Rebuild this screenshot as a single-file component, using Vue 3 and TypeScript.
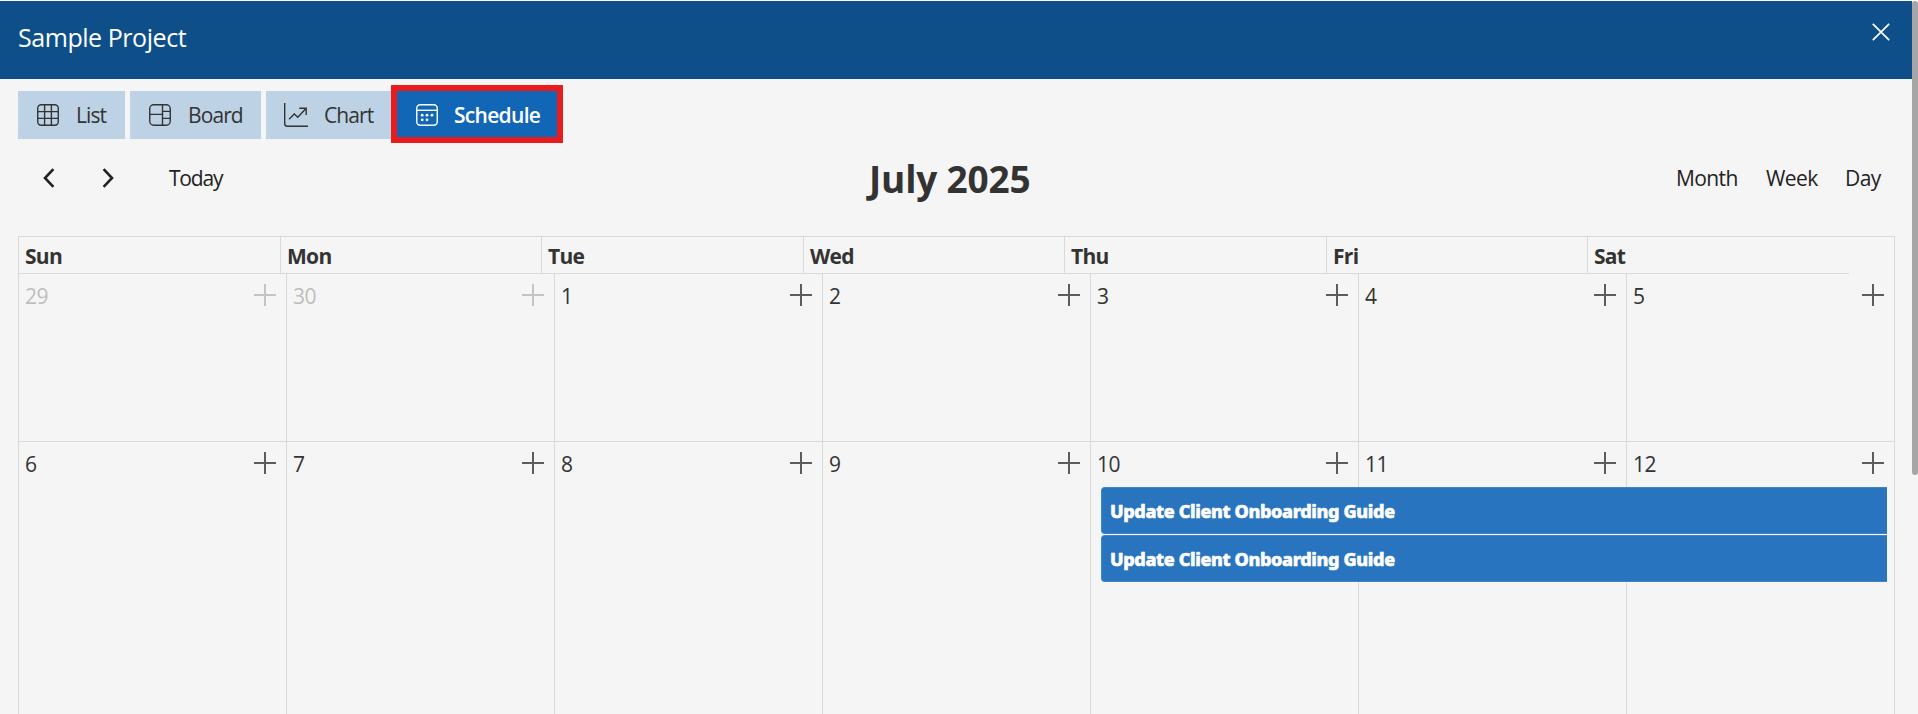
<script setup lang="ts">
interface DayCell {
  date: number
  muted?: boolean
}

interface CalendarEvent {
  title: string
}

const weekdays: string[] = ['Sun', 'Mon', 'Tue', 'Wed', 'Thu', 'Fri', 'Sat']

const weeks: DayCell[][] = [
  [{ date: 29, muted: true }, { date: 30, muted: true }, { date: 1 }, { date: 2 }, { date: 3 }, { date: 4 }, { date: 5 }],
  [{ date: 6 }, { date: 7 }, { date: 8 }, { date: 9 }, { date: 10 }, { date: 11 }, { date: 12 }],
]

const events: CalendarEvent[] = [
  { title: 'Update Client Onboarding Guide' },
  { title: 'Update Client Onboarding Guide' },
]
</script>

<template>
  <div class="page">
    <header class="header">
      <h1 class="project">Sample Project</h1>
      <button class="close" aria-label="Close">
        <svg width="18" height="18" viewBox="0 0 18 18"><path d="M0.8 0.8L17.2 17.2M17.2 0.8L0.8 17.2" /></svg>
      </button>
    </header>

    <nav class="tabs">
      <button class="tab list">
        <svg class="icon" width="24" height="24" viewBox="0 0 24 24">
          <rect x="1.75" y="1.75" width="20.5" height="20.5" rx="3.5" />
          <path d="M8.6 1.8V22.2M15.4 1.8V22.2M1.8 8.6H22.2M1.8 15.4H22.2" />
        </svg>
        <span>List</span>
      </button>
      <button class="tab board">
        <svg class="icon" width="24" height="24" viewBox="0 0 24 24">
          <rect x="1.75" y="1.75" width="20.5" height="20.5" rx="4" />
          <path d="M14.5 1.8V22.2M1.8 11.4H14.5M14.5 8.4H22.2M14.5 15.4H22.2" />
        </svg>
        <span>Board</span>
      </button>
      <button class="tab chart">
        <svg class="icon" width="26" height="26" viewBox="0 0 26 26">
          <path d="M1.7 1V21.5Q1.7 24.3 4.5 24.3H25" />
          <path d="M6 17.3L11.3 12L14.8 15.3L23 6.6M16.3 6.2H23.2V13" />
        </svg>
        <span>Chart</span>
      </button>
      <button class="tab schedule">
        <svg class="icon" width="24" height="24" viewBox="0 0 24 24">
          <rect x="1.75" y="1.75" width="20.5" height="20.5" rx="3.5" />
          <path d="M1.8 7.3H22.2" />
          <g class="dots">
            <circle cx="7.2" cy="12.2" r="1.4" /><circle cx="12" cy="12.2" r="1.4" /><circle cx="17" cy="12.2" r="1.4" />
            <circle cx="7.2" cy="16.8" r="1.4" /><circle cx="12" cy="16.8" r="1.4" />
          </g>
        </svg>
        <span>Schedule</span>
      </button>
    </nav>

    <div class="toolbar">
      <div class="nav-group">
        <button aria-label="Previous"><svg width="12" height="20" viewBox="0 0 12 20"><path d="M10.4 1.2L2 10L10.4 18.8" /></svg></button>
        <button aria-label="Next"><svg width="12" height="20" viewBox="0 0 12 20"><path d="M1.6 1.2L10 10L1.6 18.8" /></svg></button>
      </div>
      <button class="today">Today</button>
      <h2 class="month-title">July 2025</h2>
      <div class="views">
        <button class="month">Month</button>
        <button class="week-view">Week</button>
        <button class="day-view">Day</button>
      </div>
    </div>

    <main class="calendar">
      <div class="weekdays">
        <div v-for="day in weekdays" :key="day" class="weekday">{{ day }}</div>
      </div>
      <div v-for="(week, w) in weeks" :key="w" class="week">
        <div v-for="cell in week" :key="cell.date" class="cell" :class="{ muted: cell.muted }">
          <span class="date">{{ cell.date }}</span>
          <svg class="plus" width="22" height="22" viewBox="0 0 22 22"><path d="M0 11H22M11 0V22" /></svg>
        </div>
        <div v-if="w === 1" class="events">
          <div v-for="(event, i) in events" :key="i" class="event">{{ event.title }}</div>
        </div>
      </div>
    </main>

    <div class="scrollbar"></div>
  </div>
</template>

<style>
html,
body {
  overflow: hidden;
}
</style>

<style scoped>
.page {
  position: relative;
  box-sizing: border-box;
  width: 1918px;
  height: 714px;
  padding: 1px 6px 0 0;
  overflow: hidden;
  background: #f5f5f5;
  box-shadow: inset 0 1px #fff;
  color: #333;
  font-family: "Segoe UI", "Open Sans", "Noto Sans", sans-serif;
  font-size: 21px;
  line-height: 28px;
}

button {
  margin: 0;
  padding: 0;
  border: 0;
  background: transparent;
  color: inherit;
  font: inherit;
  letter-spacing: inherit;
}

h1,
h2 {
  margin: 0;
}

svg {
  display: block;
  flex: none;
  fill: none;
  stroke: currentColor;
}

.header {
  display: flex;
  justify-content: space-between;
  box-sizing: border-box;
  height: 78px;
  padding: 18px 22px 0 18px;
  background: #0e4f8a;
  color: #fff;
}

.project {
  height: 36px;
  font-size: 25px;
  font-weight: 400;
  line-height: 37px;
  letter-spacing: -0.45px;
}

.close {
  height: 18px;
  margin-top: 4px;
}

.close svg {
  stroke-width: 1.7;
}

.tabs {
  display: flex;
  height: 48px;
  padding: 12px 0 0 18px;
}

.tab {
  display: flex;
  align-items: center;
  box-sizing: border-box;
  height: 48px;
  margin-right: 5px;
  padding-left: 18px;
  background: #bed2e5;
  letter-spacing: -0.9px;
  white-space: nowrap;
}

.icon {
  margin-right: 16px;
  stroke-width: 1.4;
}

.list {
  width: 107px;
}

.board {
  width: 131px;
}

.chart {
  width: 125px;
  margin-right: 0;
  padding-left: 17px;
}

.chart .icon {
  margin-right: 15px;
}

.schedule {
  width: 172px;
  height: 58px;
  margin: -6px 0 0;
  border: 6px solid #e81c1c;
  background: #1167b5;
  color: #fff;
  font-weight: 600;
  letter-spacing: -0.7px;
}

.schedule .icon {
  margin: 1px 15px 0 0;
}

.schedule span {
  padding-top: 2px;
}

.dots {
  fill: currentColor;
  stroke: none;
}

.toolbar {
  display: grid;
  grid-template-columns: 120px 88px 1fr 233px;
  grid-template-rows: 50px;
  align-items: center;
  height: 50px;
  margin: 15px 17px 0 18px;
  color: #222;
}

.nav-group {
  display: flex;
  gap: 47px;
  margin-bottom: 2px;
  padding-left: 25px;
}

.nav-group svg {
  stroke-width: 2.6;
}

.today {
  justify-self: end;
  width: 57px;
  margin-bottom: 2px;
  text-align: left;
  letter-spacing: -1.2px;
}

.month-title {
  padding-left: 643px;
  color: #333;
  font-size: 37px;
  font-weight: 700;
  line-height: 52px;
  letter-spacing: -0.2px;
  white-space: nowrap;
}

.views {
  display: flex;
  margin-bottom: 2px;
  padding-left: 14px;
  letter-spacing: -0.6px;
}

.month {
  width: 90px;
  text-align: left;
}

.week-view {
  width: 79px;
  text-align: left;
}

.calendar {
  margin: 32px 17px 0 18px;
  border: solid #d9d9d9;
  border-width: 1px 1px 0;
}

.weekdays {
  display: grid;
  grid-template-columns: 261px 261px 262px 261px 262px 261px 1fr;
  box-sizing: border-box;
  width: 1830px;
  height: 37px;
  border-bottom: 1px solid #d9d9d9;
}

.weekday {
  box-sizing: border-box;
  height: 36px;
  padding-left: 6px;
  font-weight: 700;
  line-height: 38px;
  letter-spacing: -0.7px;
}

.weekday + .weekday {
  border-left: 1px solid #d9d9d9;
}

.week {
  position: relative;
  display: grid;
  grid-template-columns: 267px repeat(6, 268px);
  height: 167px;
}

.week + .week {
  height: 290px;
  border-top: 1px solid #d9d9d9;
}

.cell {
  display: flex;
  justify-content: space-between;
  padding: 10px 10px 0 6px;
}

.cell + .cell {
  border-left: 1px solid #d9d9d9;
}

.date {
  letter-spacing: -0.6px;
  line-height: 25px;
}

.plus {
  stroke: #5c5c5c;
  stroke-width: 2;
}

.muted {
  color: #bdbdbd;
}

.muted .plus {
  stroke: #c4c4c4;
}

.events {
  position: absolute;
  top: 45px;
  left: 1082px;
  display: grid;
  gap: 1px;
  width: 786px;
  background: #f5f9fd;
  border-radius: 4px 0 0 4px;
}

.event {
  box-sizing: border-box;
  height: 47px;
  padding-left: 8px;
  border: solid #3d84cb;
  border-width: 1px 0 1px 1px;
  border-radius: 4px 0 0 4px;
  background: #2874be;
  color: #fff;
  font-family: "Segoe UI", "Noto Sans", "Open Sans", sans-serif;
  font-size: 18px;
  font-weight: 800;
  line-height: 47px;
  letter-spacing: -0.35px;
  -webkit-text-stroke: 0.6px #fff;
}

.scrollbar {
  position: absolute;
  top: 1px;
  right: 0;
  width: 6px;
  height: 474px;
  border-radius: 3px;
  background: #a6a6a6;
}
</style>
